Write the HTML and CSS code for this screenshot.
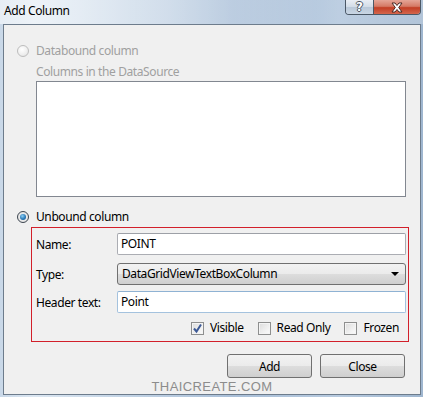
FILE: index.html
```html
<!DOCTYPE html>
<html>
<head>
<meta charset="utf-8">
<link rel="stylesheet" href="styles.css">
</head>
<body>
<div class="window">
  <div class="titlebar">
    <span class="title">Add Column</span>
    <div class="caption-buttons">
      <span class="cap-btn help">?</span>
      <span class="cap-btn close">
        <svg width="16" height="11" viewBox="0 0 16 11"><path d="M3 1 L6 1 L8 3.5 L10 1 L13 1 L9.7 5.5 L13 10 L10 10 L8 7.5 L6 10 L3 10 L6.3 5.5 Z" fill="#fff" stroke="#4a2a25" stroke-width="1"/></svg>
      </span>
    </div>
  </div>
  <div class="client">
    <div class="radio-row disabled"><span class="radio"></span><span>Databound column</span></div>
    <div class="sub-label">Columns in the DataSource</div>
    <div class="listbox"></div>
    <div class="radio-row"><span class="radio checked"></span><span>Unbound column</span></div>
    <div class="group">
      <div class="field first"><span class="field-label">Name:</span><div class="textbox">POINT</div></div>
      <div class="field"><span class="field-label">Type:</span><div class="combo"><span>DataGridViewTextBoxColumn</span><span class="arrow"></span></div></div>
      <div class="field third"><span class="field-label">Header text:</span><div class="textbox focus">Point</div></div>
      <div class="checks">
        <span class="check-item"><span class="checkbox checked"><svg width="11" height="11" viewBox="0 0 11 11"><path d="M2 5.5 L4.5 8.5 L9 1.5" fill="none" stroke="#3d5a96" stroke-width="2"/></svg></span>Visible</span>
        <span class="check-item"><span class="checkbox"></span>Read Only</span>
        <span class="check-item"><span class="checkbox"></span>Frozen</span>
      </div>
    </div>
    <div class="buttons">
      <button class="btn">Add</button>
      <button class="btn">Close</button>
    </div>
    <div class="watermark">THAICREATE.COM</div>
  </div>
</div>
</body>
</html>
```

FILE: styles.css
```css
* { box-sizing: border-box; }
html, body { margin: 0; padding: 0; }
body {
  width: 423px;
  height: 397px;
  overflow: hidden;
  font-family: "Noto Sans", "Open Sans", sans-serif;
  font-size: 12px;
  letter-spacing: -0.4px;
  color: #000;
}
.window {
  width: 423px;
  height: 397px;
  background: linear-gradient(90deg, #c9d8e8 0%, #dbe6f1 8%, #c2d3e5 30%, #a9bfd8 55%, #b7cadf 80%, #9fb6cf 100%);
  display: flex;
  flex-direction: column;
}
.titlebar {
  height: 24px;
  display: flex;
  justify-content: space-between;
  align-items: flex-start;
  background: linear-gradient(90deg, rgba(255,255,255,0.55) 0%, rgba(255,255,255,0.35) 40%, rgba(255,255,255,0.05) 75%, rgba(255,255,255,0.2) 100%);
}
.title {
  padding-left: 4px;
  line-height: 20px;
  padding-top: 1px;
  color: #000;
}
.caption-buttons {
  display: flex;
  margin-right: 2px;
  height: 15px;
  border: 1px solid #4b5866;
  border-top: none;
  border-radius: 0 0 4px 4px;
  overflow: hidden;
}
.cap-btn {
  height: 14px;
  display: flex;
  align-items: center;
  justify-content: center;
}
.help {
  width: 28px;
  background: linear-gradient(180deg, #e9eef4 0%, #d2dce7 50%, #b9c8d8 51%, #c9d6e4 100%);
  border-right: 1px solid #4b5866;
  color: #fff;
  font-family: "DejaVu Sans", sans-serif;
  font-weight: bold;
  font-size: 12px;
  letter-spacing: 0;
  line-height: 14px;
  text-shadow: -1px 0 #4a5663, 1px 0 #4a5663, 0 -1px #4a5663, 0 1px #4a5663;
}
.close {
  width: 46px;
  background: linear-gradient(180deg, #e5a597 0%, #d57a66 45%, #c23e25 55%, #d4664c 100%);
}
.close svg { display: block; }
.client {
  margin: 0 2px 0 3px;
  height: 371px;
  border: 1px solid #6d7c8c;
  background: #f0f0f0;
  display: flex;
  flex-direction: column;
}
.radio-row {
  display: flex;
  align-items: center;
  height: 16px;
  line-height: 16px;
  padding-left: 13px;
}
.radio-row:first-child { margin-top: 18px; }
.radio-row.disabled { color: #a0a0a0; }
.radio {
  width: 12px;
  height: 12px;
  border-radius: 50%;
  border: 1px solid #bdbdbd;
  background: radial-gradient(circle at 40% 35%, #ffffff 0%, #eeeeee 60%, #dcdcdc 100%);
  margin-right: 7px;
  position: relative;
}
.radio.checked {
  border-color: #3d4650;
  background: radial-gradient(circle at 50% 50%, #f6f6f6 0%, #dedede 100%);
}
.radio.checked::after {
  content: "";
  position: absolute;
  left: 2px;
  top: 2px;
  width: 6px;
  height: 6px;
  border-radius: 50%;
  background: radial-gradient(circle at 40% 35%, #8ed0f5 0%, #2a7ab8 55%, #124b85 100%);
}
.sub-label {
  color: #a0a0a0;
  line-height: 16px;
  margin-top: 5px;
  padding-left: 32px;
}
.listbox {
  margin-top: 1px;
  margin-left: 32px;
  width: 370px;
  height: 116px;
  background: #fff;
  border: 1px solid #828790;
}
.listbox + .radio-row { margin-top: 12px; }
.group {
  margin-top: 2px;
  margin-left: 27px;
  width: 378px;
  height: 115px;
  border: 1px solid #d21f2a;
  padding: 0 2px 0 4px;
  display: flex;
  flex-direction: column;
}
.field {
  display: flex;
  align-items: center;
  height: 22px;
  margin-top: 8px;
}
.field.first { margin-top: 5px; }
.field.third { margin-top: 6px; }
.field-label {
  width: 81px;
  flex: none;
}
.textbox {
  width: 289px;
  height: 22px;
  background: #fff;
  border: 1px solid #abadb3;
  border-top-color: #9da0a7;
  border-radius: 2px;
  padding-left: 3px;
  line-height: 20px;
}
.textbox.focus {
  border-color: #a4c2de;
  border-top-color: #8fb2d3;
}
.combo {
  width: 289px;
  height: 22px;
  border: 1px solid #707070;
  border-radius: 3px;
  background: linear-gradient(180deg, #f2f2f2 0%, #ebebeb 50%, #dddddd 51%, #cfcfcf 100%);
  padding: 0 6px 0 4px;
  display: flex;
  align-items: center;
  justify-content: space-between;
  line-height: 20px;
}
.arrow {
  width: 0;
  height: 0;
  border-left: 4px solid transparent;
  border-right: 4px solid transparent;
  border-top: 4px solid #000;
}
.checks {
  display: flex;
  justify-content: flex-end;
  align-items: center;
  gap: 14px;
  height: 16px;
  margin-top: 7px;
  padding-right: 7px;
}
.check-item {
  display: flex;
  align-items: center;
  line-height: 16px;
}
.checkbox {
  width: 13px;
  height: 13px;
  border: 1px solid #8e8f8f;
  background: linear-gradient(135deg, #dcdcdc 0%, #f0f0f0 60%, #fbfbfb 100%);
  box-shadow: inset 0 0 0 1px #f4f4f4;
  margin-right: 6px;
  display: flex;
  align-items: center;
  justify-content: center;
}
.buttons {
  display: flex;
  justify-content: flex-end;
  gap: 8px;
  margin-top: 12px;
  padding-right: 15px;
}
.btn {
  width: 85px;
  height: 24px;
  border: 1px solid #707070;
  border-radius: 3px;
  background: linear-gradient(180deg, #f2f2f2 0%, #ebebeb 50%, #dddddd 51%, #cfcfcf 100%);
  font-family: "Noto Sans", "Open Sans", sans-serif;
  font-size: 12px;
  letter-spacing: -0.4px;
  color: #000;
  padding: 0;
}
.watermark {
  text-align: center;
  margin-top: 2px;
  font-family: "Liberation Sans", sans-serif;
  font-size: 13px;
  letter-spacing: 0.4px;
  color: #8c8c8c;
  line-height: 14px;
}
```
